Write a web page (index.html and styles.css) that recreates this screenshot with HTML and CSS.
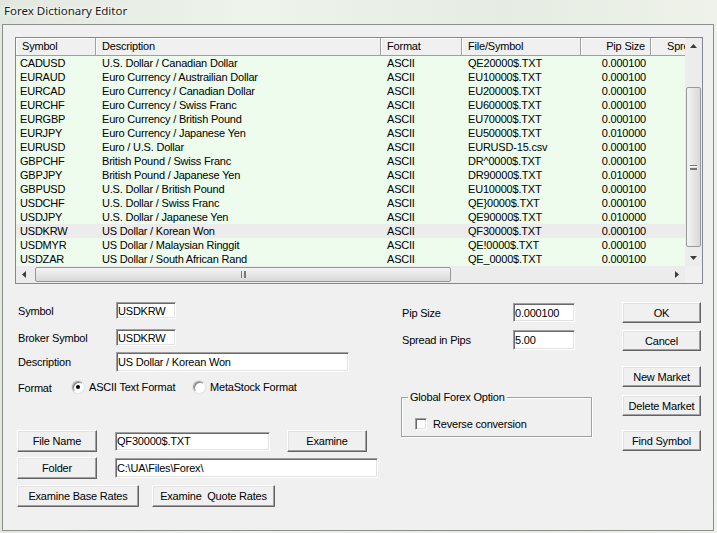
FILE: index.html
```html
<!DOCTYPE html>
<html lang="en">
<head>
    <meta charset="UTF-8">
    <meta name="viewport" content="width=device-width, initial-scale=1.0">
    <title>Forex Dictionary Editor</title>
    <link rel="stylesheet" href="styles.css">
</head>
<body>
    <div class="titlebar">Forex Dictionary Editor</div>

    <div class="dialog">
        <!-- lista de mercados -->
        <div class="listview">
            <div class="lv-main">
                <div class="lv-view">
                    <div class="lv-header">
                        <div class="hcell h-sym">Symbol</div>
                        <div class="hcell">Description</div>
                        <div class="hcell">Format</div>
                        <div class="hcell">File/Symbol</div>
                        <div class="hcell right">Pip Size</div>
                        <div class="hcell h-spr">Spread</div>
                    </div>
                    <div class="lv-row"><div class="cell c-sym">CADUSD</div><div class="cell">U.S. Dollar / Canadian Dollar</div><div class="cell">ASCII</div><div class="cell">QE20000$.TXT</div><div class="cell right">0.000100</div><div class="cell"></div></div>
                    <div class="lv-row"><div class="cell c-sym">EURAUD</div><div class="cell">Euro Currency / Austrailian Dollar</div><div class="cell">ASCII</div><div class="cell">EU10000$.TXT</div><div class="cell right">0.000100</div><div class="cell"></div></div>
                    <div class="lv-row"><div class="cell c-sym">EURCAD</div><div class="cell">Euro Currency / Canadian Dollar</div><div class="cell">ASCII</div><div class="cell">EU20000$.TXT</div><div class="cell right">0.000100</div><div class="cell"></div></div>
                    <div class="lv-row"><div class="cell c-sym">EURCHF</div><div class="cell">Euro Currency / Swiss Franc</div><div class="cell">ASCII</div><div class="cell">EU60000$.TXT</div><div class="cell right">0.000100</div><div class="cell"></div></div>
                    <div class="lv-row"><div class="cell c-sym">EURGBP</div><div class="cell">Euro Currency / British Pound</div><div class="cell">ASCII</div><div class="cell">EU70000$.TXT</div><div class="cell right">0.000100</div><div class="cell"></div></div>
                    <div class="lv-row"><div class="cell c-sym">EURJPY</div><div class="cell">Euro Currency / Japanese Yen</div><div class="cell">ASCII</div><div class="cell">EU50000$.TXT</div><div class="cell right">0.010000</div><div class="cell"></div></div>
                    <div class="lv-row"><div class="cell c-sym">EURUSD</div><div class="cell">Euro / U.S. Dollar</div><div class="cell">ASCII</div><div class="cell">EURUSD-15.csv</div><div class="cell right">0.000100</div><div class="cell"></div></div>
                    <div class="lv-row"><div class="cell c-sym">GBPCHF</div><div class="cell">British Pound / Swiss Franc</div><div class="cell">ASCII</div><div class="cell">DR^0000$.TXT</div><div class="cell right">0.000100</div><div class="cell"></div></div>
                    <div class="lv-row"><div class="cell c-sym">GBPJPY</div><div class="cell">British Pound / Japanese Yen</div><div class="cell">ASCII</div><div class="cell">DR90000$.TXT</div><div class="cell right">0.010000</div><div class="cell"></div></div>
                    <div class="lv-row"><div class="cell c-sym">GBPUSD</div><div class="cell">U.S. Dollar / British Pound</div><div class="cell">ASCII</div><div class="cell">EU10000$.TXT</div><div class="cell right">0.000100</div><div class="cell"></div></div>
                    <div class="lv-row"><div class="cell c-sym">USDCHF</div><div class="cell">U.S. Dollar / Swiss Franc</div><div class="cell">ASCII</div><div class="cell">QE}0000$.TXT</div><div class="cell right">0.000100</div><div class="cell"></div></div>
                    <div class="lv-row"><div class="cell c-sym">USDJPY</div><div class="cell">U.S. Dollar / Japanese Yen</div><div class="cell">ASCII</div><div class="cell">QE90000$.TXT</div><div class="cell right">0.010000</div><div class="cell"></div></div>
                    <div class="lv-row selected"><div class="cell c-sym">USDKRW</div><div class="cell">US Dollar / Korean Won</div><div class="cell">ASCII</div><div class="cell">QF30000$.TXT</div><div class="cell right">0.000100</div><div class="cell"></div></div>
                    <div class="lv-row"><div class="cell c-sym">USDMYR</div><div class="cell">US Dollar / Malaysian Ringgit</div><div class="cell">ASCII</div><div class="cell">QE!0000$.TXT</div><div class="cell right">0.000100</div><div class="cell"></div></div>
                    <div class="lv-row"><div class="cell c-sym">USDZAR</div><div class="cell">US Dollar / South African Rand</div><div class="cell">ASCII</div><div class="cell">QE_0000$.TXT</div><div class="cell right">0.000100</div><div class="cell"></div></div>
                </div>
                <div class="vscroll">
                    <div class="sb-btn">
                        <svg width="17" height="17" viewBox="0 0 17 17"><polygon points="5,10 12,10 8.5,6" fill="#3c3c3c"/></svg>
                    </div>
                    <div class="sb-track-v">
                        <div class="thumb-v"><span class="grip-v"></span></div>
                    </div>
                    <div class="sb-btn">
                        <svg width="17" height="17" viewBox="0 0 17 17"><polygon points="5,7 12,7 8.5,11" fill="#3c3c3c"/></svg>
                    </div>
                </div>
            </div>
            <div class="hscroll">
                <div class="sb-btn">
                    <svg width="17" height="17" viewBox="0 0 17 17"><polygon points="10,5 10,12 6,8.5" fill="#3c3c3c"/></svg>
                </div>
                <div class="sb-track-h">
                    <div class="thumb-h"><span class="grip-h"></span></div>
                </div>
                <div class="sb-btn">
                    <svg width="17" height="17" viewBox="0 0 17 17"><polygon points="7,5 7,12 11,8.5" fill="#3c3c3c"/></svg>
                </div>
                <div class="sb-corner"></div>
            </div>
        </div>

        <!-- campos de edicao -->
        <div class="editor">
            <div class="col-left">
                <div class="row row-sym">
                    <label class="lbl">Symbol</label>
                    <input class="field f-short" type="text" value="USDKRW">
                </div>
                <div class="row row-broker">
                    <label class="lbl">Broker Symbol</label>
                    <input class="field f-short" type="text" value="USDKRW">
                </div>
                <div class="row row-desc">
                    <label class="lbl">Description</label>
                    <input class="field f-desc" type="text" value="US Dollar / Korean Won">
                </div>
                <div class="row row-format">
                    <span class="lbl-format">Format</span>
                    <span class="radio checked"></span>
                    <span class="radio-text">ASCII Text Format</span>
                    <span class="radio"></span>
                    <span class="radio-text">MetaStock Format</span>
                </div>
                <div class="row row-file">
                    <button class="btn b-file">File Name</button>
                    <input class="field f-file" type="text" value="QF30000$.TXT">
                    <button class="btn b-examine">Examine</button>
                </div>
                <div class="row row-folder">
                    <button class="btn b-file">Folder</button>
                    <input class="field f-folder" type="text" value="C:\UA\Files\Forex\">
                </div>
                <div class="row row-rates">
                    <button class="btn b-base">Examine Base Rates</button>
                    <button class="btn b-quote">Examine&nbsp; Quote Rates</button>
                </div>
            </div>

            <div class="col-mid">
                <div class="row row-pip">
                    <label class="lbl-mid">Pip Size</label>
                    <input class="field f-pip" type="text" value="0.000100">
                </div>
                <div class="row row-spread">
                    <label class="lbl-mid">Spread in Pips</label>
                    <input class="field f-pip" type="text" value="5.00">
                </div>
                <div class="group">
                    <span class="group-title">Global Forex Option</span>
                    <div class="check-row">
                        <span class="checkbox"></span>
                        <span>Reverse conversion</span>
                    </div>
                </div>
            </div>

            <div class="col-right">
                <button class="btn b-side b-ok">OK</button>
                <button class="btn b-side b-cancel">Cancel</button>
                <button class="btn b-side b-new">New Market</button>
                <button class="btn b-side b-delete">Delete Market</button>
                <button class="btn b-side b-find">Find Symbol</button>
            </div>
        </div>
    </div>
</body>
</html>
```

FILE: styles.css
```css
* {
    box-sizing: border-box;
}

body {
    margin: 0;
    width: 717px;
    height: 533px;
    overflow: hidden;
    font-family: "Liberation Sans", Arial, sans-serif;
    font-size: 11px;
    letter-spacing: -0.2px;
    color: #000;
    background: linear-gradient(90deg, #e2e8df 0%, #eef3ec 35%, #e6ece3 70%, #eef2ea 100%);
}

.titlebar {
    height: 24px;
    padding: 3px 0 0 4px;
    font-family: "Noto Sans", "Open Sans", sans-serif;
    font-size: 11.5px;
    letter-spacing: 0;
    color: #1b1b1b;
    text-shadow: 0 0 6px #fff, 0 0 3px #fff;
}

.dialog {
    margin-left: 2px;
    width: 712px;
    height: 507px;
    border: 1px solid #8c908b;
    background: #f0f0f0;
    overflow: hidden;
}

/* lista */
.listview {
    margin: 12px 0 0 12px;
    width: 688px;
    height: 247px;
    border: 1px solid #828790;
    background: #fff;
    display: flex;
    flex-direction: column;
}

.lv-main {
    display: flex;
    height: 228px;
}

.lv-view {
    width: 669px;
    overflow: hidden;
    background: #edfced;
}

.lv-header,
.lv-row {
    display: grid;
    grid-template-columns: 80px 285px 81px 119px 70px 100px;
    width: 735px;
}

.lv-header {
    height: 18px;
    background: #f0f0f0;
}

.hcell {
    height: 18px;
    line-height: 16px;
    padding-left: 6px;
    white-space: nowrap;
    overflow: hidden;
    border-right: 1px solid #a0a0a0;
    border-bottom: 1px solid #a0a0a0;
    box-shadow: inset 1px 1px 0 #fff;
}

.hcell.h-spr {
    padding-left: 16px;
}

.hcell.right {
    text-align: right;
    padding-right: 5px;
}

.lv-row {
    height: 14px;
    line-height: 14px;
}

.lv-row.selected {
    background: #ececec;
}

.cell {
    padding-left: 6px;
    white-space: nowrap;
    overflow: hidden;
}

.cell.c-sym {
    padding-left: 4px;
}

.cell.right {
    text-align: right;
    padding-right: 5px;
}

/* barras de rolagem */
.vscroll {
    width: 17px;
    display: flex;
    flex-direction: column;
    background: #ececec;
}

.sb-btn {
    width: 17px;
    height: 17px;
    flex: none;
}

.sb-btn svg {
    display: block;
}

.sb-track-v {
    flex: 1;
    padding: 32px 1px 0 1px;
}

.thumb-v {
    height: 160px;
    border: 1px solid #989898;
    border-radius: 2px;
    background: linear-gradient(90deg, #f4f4f4, #e6e6e6 50%, #d8d8d8);
    display: flex;
    align-items: center;
    justify-content: center;
}

.grip-v {
    width: 7px;
    height: 5px;
    border-top: 1px solid #777;
    border-bottom: 1px solid #777;
    background: linear-gradient(#fff 0, #fff 1px, transparent 1px, transparent 2px, #777 2px, #777 3px, transparent 3px);
}

.hscroll {
    height: 17px;
    display: flex;
    background: #ececec;
}

.sb-track-h {
    flex: 1;
    padding: 1px 0 1px 2px;
}

.thumb-h {
    width: 416px;
    height: 15px;
    border: 1px solid #989898;
    border-radius: 2px;
    background: linear-gradient(#f4f4f4, #e6e6e6 50%, #d8d8d8);
    display: flex;
    align-items: center;
    justify-content: center;
}

.grip-h {
    width: 5px;
    height: 7px;
    border-left: 1px solid #777;
    border-right: 1px solid #777;
    background: linear-gradient(90deg, transparent 0, transparent 2px, #777 2px, #777 3px, transparent 3px);
}

.sb-corner {
    width: 17px;
    background: #f0f0f0;
}

/* campos */
.editor {
    display: flex;
    align-items: flex-start;
}

.row {
    display: flex;
    align-items: center;
}

.col-left {
    margin-left: 14px;
    width: 363px;
}

.lbl {
    width: 99px;
    padding-left: 1px;
}

.field {
    height: 17px;
    margin: 0;
    padding: 0 0 0 1px;
    border: 1px solid;
    border-color: #a0a0a0 #fff #fff #a0a0a0;
    box-shadow: inset 1px 1px 0 #696969, inset -1px -1px 0 #e3e3e3;
    background: #fff;
    font-family: inherit;
    font-size: 11px;
    letter-spacing: -0.2px;
    color: #000;
    outline: none;
}

.row-sym {
    margin-top: 18px;
    height: 17px;
}

.row-broker {
    margin-top: 10px;
    height: 17px;
}

.row-desc {
    margin-top: 6px;
    height: 20px;
}

.f-short {
    width: 60px;
}

.f-desc {
    width: 233px;
    height: 20px;
}

.row-format {
    margin-top: 7px;
    height: 16px;
}

.lbl-format {
    width: 55px;
    padding-left: 1px;
    padding-top: 2px;
}

.radio {
    width: 12px;
    height: 12px;
    border-radius: 50%;
    border: 1px solid;
    border-color: #a0a0a0 #fff #fff #a0a0a0;
    box-shadow: inset 1px 1px 0 #808080, 0 0 0 1px #e3e3e3;
    background: #fff;
    position: relative;
}

.radio.checked::after {
    content: "";
    position: absolute;
    left: 3px;
    top: 3px;
    width: 4px;
    height: 4px;
    border-radius: 50%;
    background: #000;
}

.radio-text {
    margin-left: 5px;
    width: 104px;
}

.row-file {
    margin-top: 35px;
    height: 22px;
}

.row-folder {
    margin-top: 5px;
    height: 22px;
}

.row-rates {
    margin-top: 6px;
    height: 22px;
}

.btn {
    height: 22px;
    margin: 0;
    padding: 0;
    border: 1px solid;
    border-color: #fff #646464 #646464 #fff;
    box-shadow: inset -1px -1px 0 #a0a0a0, inset 1px 1px 0 #e3e3e3;
    background: #f0f0f0;
    font-family: inherit;
    font-size: 11px;
    letter-spacing: -0.2px;
    color: #000;
}

.b-file {
    width: 80px;
}

.f-file {
    margin-left: 18px;
    width: 155px;
    height: 19px;
}

.b-examine {
    margin-left: 17px;
    width: 80px;
}

.f-folder {
    margin-left: 18px;
    width: 263px;
    height: 20px;
}

.b-base {
    width: 122px;
}

.b-quote {
    margin-left: 13px;
    width: 123px;
}

.col-mid {
    margin-left: 21px;
    width: 191px;
}

.lbl-mid {
    width: 112px;
    padding-left: 1px;
}

.row-pip {
    margin-top: 19px;
    height: 19px;
}

.row-spread {
    margin-top: 8px;
    height: 20px;
}

.f-pip {
    width: 62px;
    height: 100%;
}

.group {
    position: relative;
    margin-top: 47px;
    height: 40px;
    border: 1px solid #a0a0a0;
    box-shadow: 1px 1px 0 #fff, inset 1px 1px 0 #fff;
}

.group-title {
    position: absolute;
    left: 6px;
    top: -7px;
    padding: 0 2px;
    line-height: 13px;
    background: #f0f0f0;
}

.check-row {
    display: flex;
    align-items: center;
    margin: 20px 0 0 13px;
}

.checkbox {
    width: 12px;
    height: 12px;
    margin-right: 6px;
    border: 1px solid;
    border-color: #a0a0a0 #fff #fff #a0a0a0;
    box-shadow: inset 1px 1px 0 #696969, inset -1px -1px 0 #e3e3e3;
    background: #fff;
}

.col-right {
    margin-left: 30px;
    width: 79px;
    display: flex;
    flex-direction: column;
}

.b-side {
    width: 79px;
    height: 21px;
}

.b-ok {
    margin-top: 18px;
}

.b-cancel {
    margin-top: 7px;
}

.b-new {
    margin-top: 15px;
}

.b-delete {
    margin-top: 8px;
}

.b-find {
    margin-top: 14px;
}
```
